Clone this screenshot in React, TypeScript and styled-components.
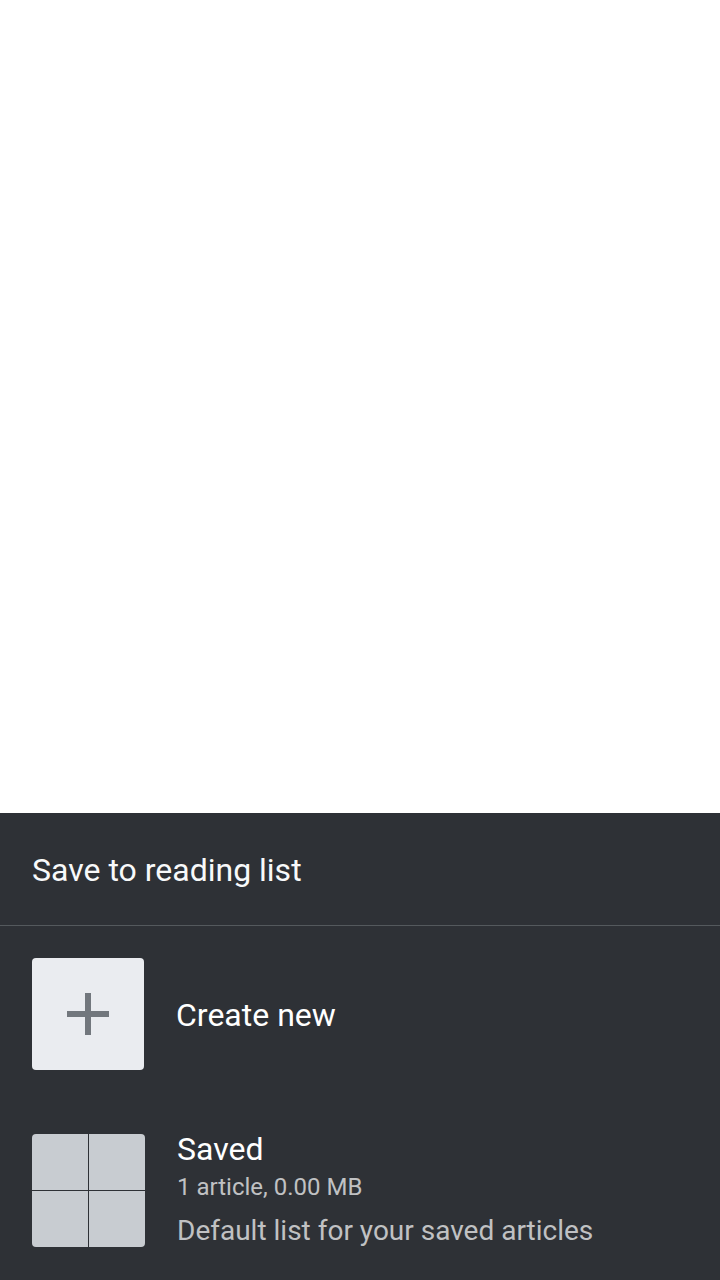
import React from "react";
import styled, { createGlobalStyle } from "styled-components";

const GlobalStyle = createGlobalStyle`
  * { box-sizing: border-box; }
  body { margin: 0; background: #ffffff; font-family: Roboto, "Liberation Sans", sans-serif; }
`;

const Page = styled.main`
  min-height: 100vh;
  display: flex;
  flex-direction: column;
  justify-content: flex-end;
`;

const Sheet = styled.section`
  background: #2e3136;
  color: #ffffff;
`;

const Title = styled.h1`
  margin: 0;
  padding: 37px 32px 35px;
  border-bottom: 1px solid #54595d;
  color: #f8f9fa;
  font-size: 32px;
  line-height: 40px;
  font-weight: 400;
`;

const Lists = styled.ul`
  list-style: none;
  margin: 0;
  padding: 0 0 1px;
`;

const Row = styled.button`
  display: flex;
  align-items: center;
  gap: 32px;
  width: 100%;
  padding: 32px;
  border: 0;
  background: none;
  color: inherit;
  font: inherit;
  text-align: left;
  cursor: pointer;
`;

const AddTile = styled.span`
  display: grid;
  place-items: center;
  flex: none;
  width: 112px;
  height: 112px;
  border-radius: 4px;
  background: #eaecf0;
`;

const Thumbnails = styled.span`
  display: grid;
  grid-template-columns: 1fr 1fr;
  gap: 1px;
  flex: none;
  width: 113px;
  height: 113px;
  border-radius: 4px;
  overflow: hidden;
`;

const Thumbnail = styled.span`
  background: #c8ccd1;
`;

const Details = styled.span`
  display: flex;
  flex-direction: column;
  min-width: 0;
  padding-bottom: 1px;
`;

const Name = styled.span`
  padding-top: 2px;
  font-size: 32px;
  line-height: 24px;
`;

const Stats = styled.span`
  padding-top: 12px;
  color: #c0c1c3;
  font-size: 24px;
  line-height: 28px;
`;

const Description = styled.span`
  padding-top: 16px;
  color: #c0c1c3;
  font-size: 28px;
  line-height: 28px;
`;

export default function App() {
  return (
    <>
      <GlobalStyle />
      <Page>
        <Sheet aria-labelledby="sheet-title">
          <Title id="sheet-title">Save to reading list</Title>
          <Lists>
            <li>
              <Row type="button">
                <AddTile>
                  <svg width="42" height="42" viewBox="0 0 42 42" fill="#72777d" aria-hidden="true">
                    <path d="M18 0h6v18h18v6H24v18h-6V24H0v-6h18z" />
                  </svg>
                </AddTile>
                <Name>Create new</Name>
              </Row>
            </li>
            <li>
              <Row type="button">
                <Thumbnails aria-hidden="true">
                  <Thumbnail />
                  <Thumbnail />
                  <Thumbnail />
                  <Thumbnail />
                </Thumbnails>
                <Details>
                  <Name>Saved</Name>
                  <Stats>1 article, 0.00 MB</Stats>
                  <Description>Default list for your saved articles</Description>
                </Details>
              </Row>
            </li>
          </Lists>
        </Sheet>
      </Page>
    </>
  );
}
